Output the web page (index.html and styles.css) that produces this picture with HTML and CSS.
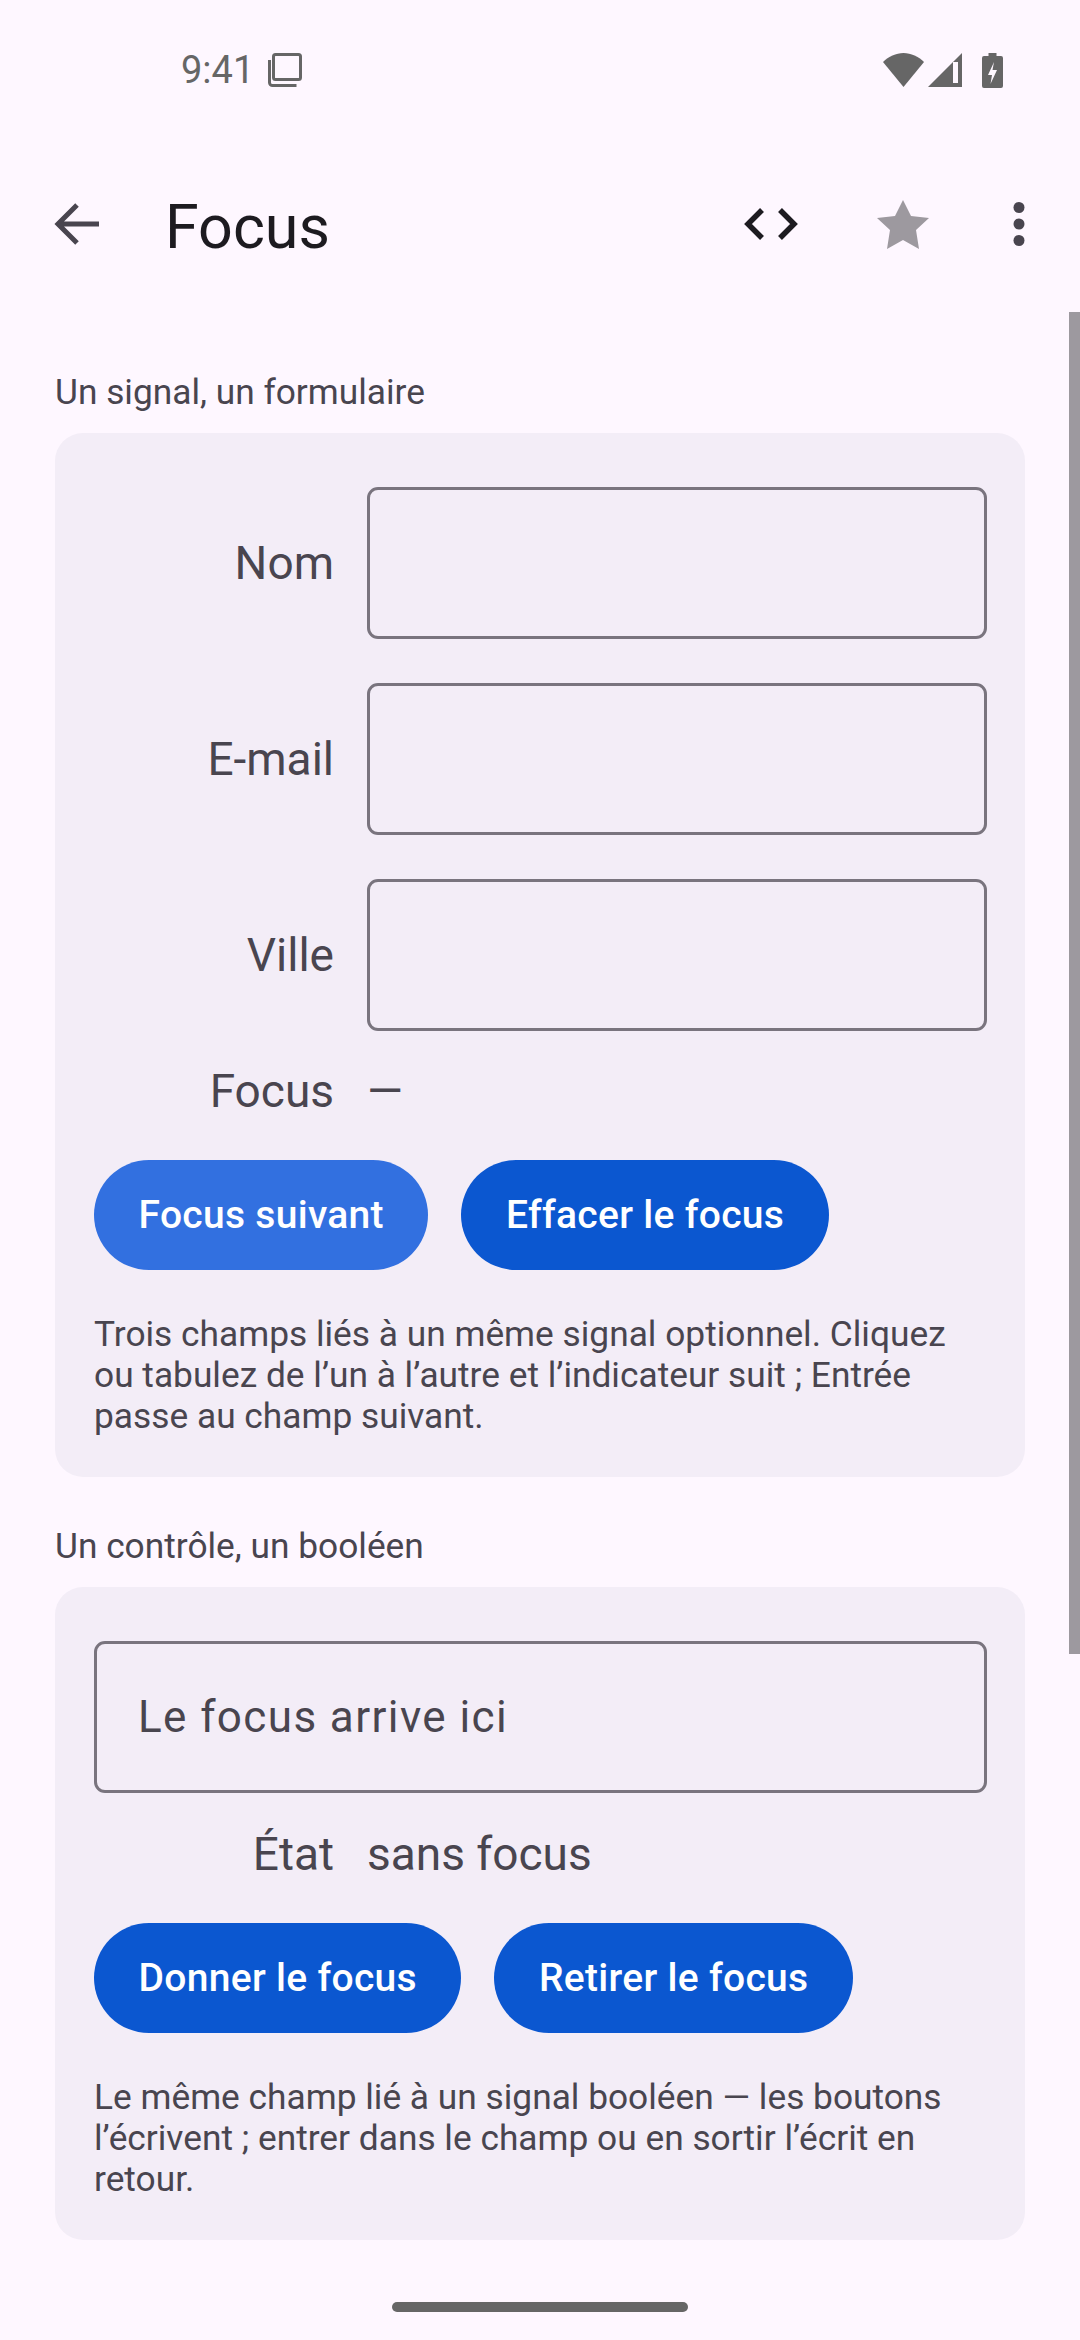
FILE: index.html
```html
<!DOCTYPE html>
<html lang="fr">

<head>
    <meta charset="utf-8">
    <title>Focus</title>
    <link rel="stylesheet" href="styles.css">
</head>

<body>
    <div class="screen">
        <div class="status-bar">
            <div class="status-left">
                <span class="clock">9:41</span>
                <svg class="status-copy" viewBox="0 0 34 34" width="34" height="34">
                    <rect x="5.500" y="1.500" width="27" height="25" rx="2" fill="none" stroke="#666" stroke-width="3" />
                    <path d="M1.500 7v22.500a3 3 0 0 0 3 3h24" fill="none" stroke="#666" stroke-width="3" />
                </svg>
            </div>
            <div class="status-right">
                <svg class="status-wifi" viewBox="0 0 41 34" width="41" height="34">
                    <path d="M0 9C5.500 3.500 13 0 20.500 0S35.500 3.500 41 9L20.500 34z" fill="#666" />
                </svg>
                <svg class="status-signal" viewBox="0 0 34 34" width="34" height="34">
                    <path d="M34 0v34H0zM25 9v21h5V9z" fill="#666" fill-rule="evenodd" />
                </svg>
                <svg viewBox="0 0 21 35" width="21" height="35">
                    <path d="M6.500 0h8v3H19a2 2 0 0 1 2 2v28a2 2 0 0 1-2 2H2a2 2 0 0 1-2-2V5a2 2 0 0 1 2-2h4.500z" fill="#666" />
                    <path d="M12 9l-6 13h4l-1.500 9 6.500-14h-4.500z" fill="#fef7ff" />
                </svg>
            </div>
        </div>

        <header class="app-bar">
            <button class="icon-btn back-btn" aria-label="Retour">
                <svg viewBox="0 0 46 46" width="46" height="46">
                    <path d="M45 23H5M23 4L4 23l19 19" fill="none" stroke="#49454f" stroke-width="5" />
                </svg>
            </button>
            <h1 class="title">Focus</h1>
            <div class="actions">
                <svg viewBox="0 0 54 32" width="54" height="32">
                    <path d="M18 2L4 16l14 14M36 2l14 14-14 14" fill="none" stroke="#1d1b20" stroke-width="5.500" />
                </svg>
                <svg viewBox="0 0 52 49" width="52" height="49">
                    <path d="M26 0l8 16 18 2-13 12 3 19-16-9-16 9 3-19L0 18l18-2z" fill="#9d999f" />
                </svg>
                <svg class="more-icon" viewBox="0 0 12 44" width="12" height="44">
                    <circle cx="6" cy="5.500" r="5.500" fill="#49454f" />
                    <circle cx="6" cy="22" r="5.500" fill="#49454f" />
                    <circle cx="6" cy="38.500" r="5.500" fill="#49454f" />
                </svg>
            </div>
        </header>

        <main class="content">
            <section class="section">
                <h2 class="section-title">Un signal, un formulaire</h2>
                <div class="card">
                    <div class="field-rows">
                        <div class="row">
                            <label class="row-label">Nom</label>
                            <input class="field" type="text">
                        </div>
                        <div class="row">
                            <label class="row-label">E-mail</label>
                            <input class="field" type="text">
                        </div>
                        <div class="row">
                            <label class="row-label">Ville</label>
                            <input class="field" type="text">
                        </div>
                    </div>
                    <div class="row row-state">
                        <span class="row-label">Focus</span>
                        <span class="state">—</span>
                    </div>
                    <div class="buttons">
                        <button class="btn btn-focused">Focus suivant</button>
                        <button class="btn">Effacer le focus</button>
                    </div>
                    <p class="hint">Trois champs liés à un même signal optionnel. Cliquez ou tabulez de l’un à l’autre et l’indicateur suit ; Entrée passe au champ suivant.</p>
                </div>
            </section>

            <section class="section">
                <h2 class="section-title">Un contrôle, un booléen</h2>
                <div class="card">
                    <input class="field field-full" type="text" placeholder="Le focus arrive ici">
                    <div class="row row-state">
                        <span class="row-label">État</span>
                        <span class="state">sans focus</span>
                    </div>
                    <div class="buttons">
                        <button class="btn">Donner le focus</button>
                        <button class="btn">Retirer le focus</button>
                    </div>
                    <p class="hint">Le même champ lié à un signal booléen — les boutons l’écrivent ; entrer dans le champ ou en sortir l’écrit en retour.</p>
                </div>
            </section>
        </main>

        <div class="scrollbar"></div>
        <div class="home-bar"></div>
    </div>
</body>

</html>
```

FILE: styles.css
```css
html {
    height: 100%;
    font-family: Roboto, 'Noto Sans', sans-serif;
}

body {
    margin: 0;
    background-color: #fef7ff;
}

.screen {
    position: relative;
    width: 1080px;
    height: 2340px;
    overflow: hidden;
    background-color: #fef7ff;
}

.status-bar {
    display: flex;
    justify-content: space-between;
    align-items: center;
    width: 1080px;
    height: 140px;
    padding: 0 77px 0 181px;
    box-sizing: border-box;
}

.status-left,
.status-right {
    display: flex;
    align-items: center;
}

.clock {
    font-size: 38px;
    color: #666;
}

.status-copy {
    margin-left: 14px;
}

.status-wifi {
    margin-right: 4px;
}

.status-signal {
    margin-right: 20px;
}

.app-bar {
    display: flex;
    align-items: center;
    height: 154px;
    margin-top: 7px;
}

.icon-btn {
    border: 0;
    padding: 0;
    background: none;
}

.back-btn {
    display: flex;
    margin-left: 54px;
    width: 111px;
}

.title {
    margin: 6px 0 0;
    font-size: 61px;
    font-weight: 400;
    color: #1d1b20;
}

.actions {
    display: flex;
    align-items: center;
    gap: 79px;
    margin-left: auto;
    margin-right: 55px;
}

.more-icon {
    margin-left: 5px;
}

.content {
    padding: 0 55px;
}

.section {
    padding-top: 49px;
}

.section:first-child {
    padding-top: 71px;
}

.section-title {
    margin: 0;
    font-size: 35.300px;
    font-weight: 400;
    line-height: 41px;
    color: #49454f;
}

.card {
    margin-top: 20px;
    padding: 54px 38px 40px 39px;
    background-color: #f3edf7;
    border-radius: 28px;
}

.field-rows {
    display: flex;
    flex-direction: column;
    gap: 44px;
}

.row {
    display: flex;
    align-items: center;
    gap: 33px;
}

.row-label {
    flex: 0 0 240px;
    text-align: right;
    font-size: 46px;
    color: #49454f;
}

.field {
    flex: 1;
    min-width: 0;
    height: 152px;
    box-sizing: border-box;
    padding: 0 41px;
    background: none;
    border: 3px solid #79747e;
    border-radius: 11px;
    font-family: inherit;
    font-size: 44px;
    letter-spacing: 1.400px;
    color: #49454f;
}

.field::placeholder {
    color: #49454f;
    opacity: 1;
}

.field-full {
    display: block;
    width: 100%;
}

.row-state {
    height: 58px;
    margin-top: 31px;
}

.field-full + .row-state {
    margin-top: 32px;
}

.state {
    font-size: 46px;
    color: #49454f;
}

.buttons {
    display: flex;
    gap: 33px;
    margin-top: 40px;
}

.btn {
    height: 110px;
    padding: 0 44.500px;
    border: 0;
    border-radius: 55px;
    background-color: #0b57d0;
    color: #fff;
    font-family: inherit;
    font-size: 39px;
    font-weight: 500;
    letter-spacing: 0.300px;
}

.btn-focused {
    background-color: #3270e0;
}

.hint {
    margin: 44px 0 0;
    font-size: 35.300px;
    line-height: 41px;
    color: #49454f;
}

.scrollbar {
    position: absolute;
    top: 312px;
    right: 0;
    width: 11px;
    height: 1342px;
    background-color: #9d999f;
}

.home-bar {
    position: absolute;
    left: 392px;
    top: 2302px;
    width: 296px;
    height: 10px;
    border-radius: 5px;
    background-color: #666;
}
```
